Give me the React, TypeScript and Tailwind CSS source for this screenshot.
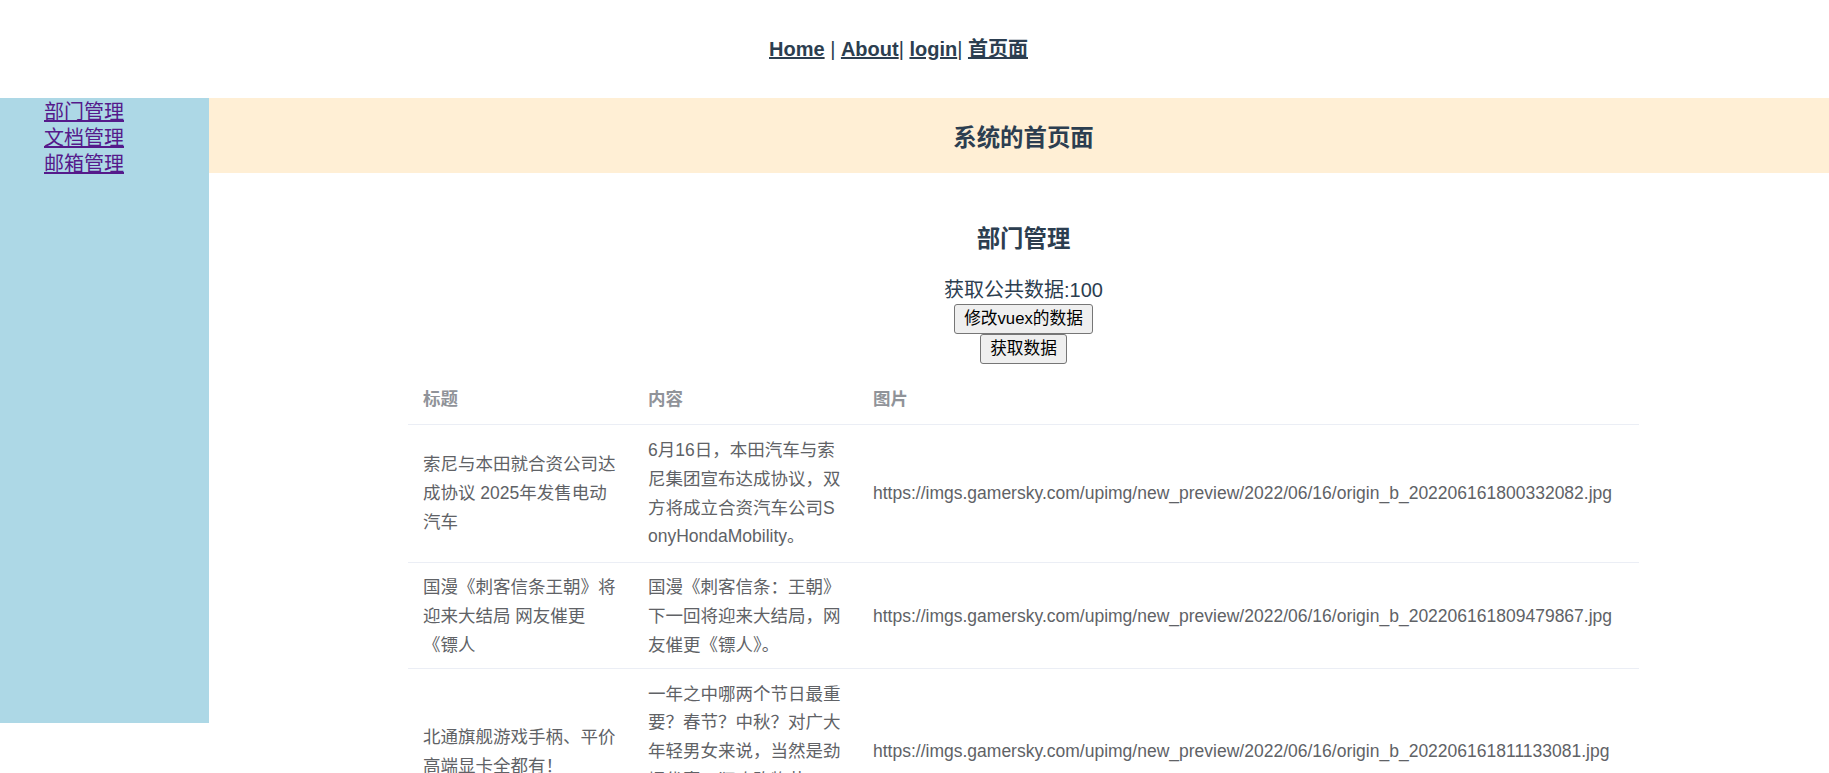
import React from "react";

const CJK = '"Liberation Sans", "Noto Sans CJK SC", sans-serif';

const rows = [
  {
    h: "h-[138px]",
    title: "索尼与本田就合资公司达成协议 2025年发售电动汽车",
    content: "6月16日，本田汽车与索尼集团宣布达成协议，双方将成立合资汽车公司SonyHondaMobility。",
    img: "https://imgs.gamersky.com/upimg/new_preview/2022/06/16/origin_b_202206161800332082.jpg",
  },
  {
    h: "h-[106px]",
    title: "国漫《刺客信条王朝》将迎来大结局 网友催更《镖人",
    content: "国漫《刺客信条：王朝》下一回将迎来大结局，网友催更《镖人》。",
    img: "https://imgs.gamersky.com/upimg/new_preview/2022/06/16/origin_b_202206161809479867.jpg",
  },
  {
    h: "h-[166px]",
    title: "北通旗舰游戏手柄、平价高端显卡全都有！",
    content: "一年之中哪两个节日最重要？春节？中秋？对广大年轻男女来说，当然是劲爆优惠，狂欢购物节818来了，好物都在等你。",
    img: "https://imgs.gamersky.com/upimg/new_preview/2022/06/16/origin_b_202206161811133081.jpg",
  },
];

export default function App() {
  return (
    <div className="bg-white min-h-[773px]" style={{ fontFamily: CJK }}>
      {/* top nav */}
      <nav className="h-[98px] pt-[38px] pr-[32px] text-center text-[20px] leading-[23px] text-[#2c3e50]">
        <a href="#" className="font-bold underline text-[#2c3e50]">Home</a>
        {" | "}
        <a href="#" className="font-bold underline text-[#2c3e50]">About</a>
        {"| "}
        <a href="#" className="font-bold underline text-[#2c3e50]">login</a>
        {"| "}
        <a href="#" className="font-bold underline text-[#2c3e50]">首页面</a>
      </nav>

      <div className="flex items-start">
        {/* aside */}
        <aside className="w-[209px] h-[625px] shrink-0 bg-[#add8e6] pl-[44px] pt-[1px] flex flex-col items-start">
          <a href="#" className="text-[20px] leading-[26px] underline text-[#551a8b]">部门管理</a>
          <a href="#" className="text-[20px] leading-[26px] underline text-[#551a8b]">文档管理</a>
          <a href="#" className="text-[20px] leading-[26px] underline text-[#551a8b]">邮箱管理</a>
        </aside>

        {/* main column */}
        <div className="flex-1 min-w-0">
          <header className="h-[75px] bg-[#ffefd5] pl-[9px] flex items-center justify-center">
            <h3 className="text-[23.4px] font-bold leading-[31px] text-[#2c3e50] pt-[6px]">系统的首页面</h3>
          </header>

          <main className="pl-[9px] pt-[51px] text-[#2c3e50] flex flex-col items-center">
            <h3 className="text-[23.4px] font-bold leading-[31px]">部门管理</h3>
            <div className="mt-[22px] text-[20px] leading-[26px]">获取公共数据:100</div>
            <button className="mt-[1px] h-[30px] w-[139px] rounded-[3px] border border-[#767676] bg-[#efefef] text-[16.7px] leading-[20px] text-black">
              修改vuex的数据
            </button>
            <button className="h-[30px] w-[87px] rounded-[3px] border border-[#767676] bg-[#efefef] text-[16.7px] leading-[20px] text-black">
              获取数据
            </button>

            <div className="mt-[11px] w-[1231px] text-left text-[17.5px] leading-[28.75px]">
              <div className="grid grid-cols-[225px_225px_1fr] h-[50px] border-b border-[#ebeef5] font-bold text-[#909399]">
                <div className="flex items-center px-[15px]">标题</div>
                <div className="flex items-center px-[15px]">内容</div>
                <div className="flex items-center px-[15px]">图片</div>
              </div>
              {rows.map((r, i) => (
                <div
                  key={i}
                  className={`grid grid-cols-[225px_225px_1fr] border-b border-[#ebeef5] text-[#606266] ${r.h}`}
                >
                  <div className="flex items-center px-[15px] py-[10px] break-all">
                    <span>{r.title}</span>
                  </div>
                  <div className="flex items-center px-[15px] py-[10px] break-all">
                    <span>{r.content}</span>
                  </div>
                  <div className="flex items-center px-[15px] py-[10px] whitespace-nowrap">
                    <span>{r.img}</span>
                  </div>
                </div>
              ))}
            </div>
          </main>
        </div>
      </div>
    </div>
  );
}
